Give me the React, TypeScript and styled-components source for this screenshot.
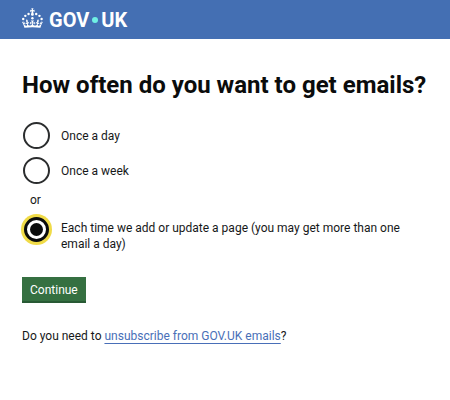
import React from "react";
import styled, { createGlobalStyle } from "styled-components";

const GlobalStyle = createGlobalStyle`
  * { box-sizing: border-box; }
  body {
    margin: 0;
    background: #ffffff;
    color: #161819;
    font-family: Roboto, "Liberation Sans", sans-serif;
    font-size: 12px;
    line-height: 16px;
  }
`;

const Header = styled.header`
  display: flex;
  align-items: center;
  height: 39px;
  padding: 0 22px;
  background: #446fb3;
`;

const HomeLink = styled.a`
  display: flex;
  align-items: center;
  gap: 6px;
  color: #ffffff;
  text-decoration: none;
`;

const CrownIcon = styled.svg`
  width: 21px;
  height: 20px;
  margin-bottom: 4px;
  fill: currentColor;
`;

const Wordmark = styled.span`
  display: flex;
  align-items: center;
  gap: 3px;
  font-size: 20px;
  line-height: 24px;
  font-weight: 700;
`;

const Dot = styled.span`
  width: 6px;
  height: 6px;
  border-radius: 50%;
  background: #6ff0e4;
`;

const Main = styled.main`
  padding: 30px 22px;
`;

const Fieldset = styled.fieldset`
  margin: 0;
  padding: 0;
  border: 0;
`;

const Legend = styled.legend`
  padding: 0;
`;

const Title = styled.h1`
  margin: 0;
  font-size: 24px;
  line-height: 32px;
  font-weight: 700;
  color: #0b0c0c;
`;

const Options = styled.div`
  display: flex;
  flex-direction: column;
  gap: 8px;
  padding: 21px 0 25px 1px;
`;

const Option = styled.label`
  display: flex;
  align-items: flex-start;
  gap: 11px;
  cursor: pointer;
`;

const OptionText = styled.span<{ $long?: boolean }>`
  padding-top: ${({ $long }) => ($long ? 4 : 6)}px;
`;

const Radio = styled.input`
  appearance: none;
  display: grid;
  place-items: center;
  flex: none;
  width: 27px;
  height: 27px;
  margin: 0;
  border: 2px solid #2b2d2e;
  border-radius: 50%;
  background: #ffffff;
  outline: none;

  &:checked {
    width: 25px;
    height: 25px;
    margin: 1px;
    border-width: 3px;
    border-color: #0b0c0c;
    box-shadow: 0 0 0 3px #f0db48;
  }

  &:checked::before {
    content: "";
    width: 13px;
    height: 13px;
    border-radius: 50%;
    background: #0b0c0c;
  }
`;

const Divider = styled.div`
  padding-left: 7px;
`;

const Button = styled.button`
  display: block;
  padding: 4px 8px;
  border: 0;
  border-radius: 0;
  background: #357041;
  box-shadow: inset 0 -2px 0 #285a34;
  color: #ffffff;
  font: inherit;
  line-height: 18px;
  cursor: pointer;
`;

const Help = styled.p`
  margin: 25px 0 0;
`;

const Link = styled.a`
  color: #496fb8;
  text-decoration: underline;
  text-decoration-thickness: 1px;
  text-underline-offset: 3px;
`;

const choices = [
  { value: "daily", text: "Once a day" },
  { value: "weekly", text: "Once a week" },
  {
    value: "immediately",
    text: "Each time we add or update a page (you may get more than one email a day)",
    divider: "or",
    long: true,
  },
];

function Crown() {
  return (
    <CrownIcon viewBox="0 0 64 60" aria-hidden="true">
      <circle cx="20" cy="17.6" r="3.7" />
      <circle cx="10.2" cy="23.5" r="3.7" />
      <circle cx="3.7" cy="33.2" r="3.7" />
      <circle cx="31.7" cy="30.6" r="3.7" />
      <circle cx="43.3" cy="17.6" r="3.7" />
      <circle cx="53.2" cy="23.5" r="3.7" />
      <circle cx="59.7" cy="33.2" r="3.7" />
      <path d="M33.1,9.8c.2-.1.3-.3.5-.5l4.6,2.4v-6.8l-4.6,1.5c-.1-.2-.3-.3-.5-.5l1.9-5.9h-6.7l1.9,5.9c-.2.1-.3.3-.5.5l-4.6-1.5v6.8l4.6-2.4c.1.2.3.3.5.5l-2.6,8c-.9,2.8,1.2,5.7,4.1,5.7h0c3,0,5.1-2.9,4.1-5.7l-2.6-8ZM37,37.9s-3.4,3.8-4.1,6.1c2.2,0,4.2-.5,6.4-2.8l-.7,8.5c-2-2.8-4.4-4.1-5.7-3.8.1,3.1.5,6.7,5.8,7.2,3.7.3,6.7-1.5,7-3.8.4-2.6-2-4.3-3.7-1.6-1.4-4.5,2.4-6.1,4.9-3.2-1.9-4.5-1.8-7.7,2.4-10.9,3,4,2.6,7.3-1.2,11.1,2.4-1.3,6.2,0,4,4.6-1.2-2.8-3.7-2.2-4.2.2-.3,1.7.7,3.7,3,4.2,1.9.3,4.7-.9,7-5.9-1.3,0-2.4.7-3.9,1.7l2.4-8c.6,2.3,1.4,3.7,2.2,4.5.6-1.6.5-2.8,0-5.3l5,1.8c-2.6,3.6-5.2,8.7-7.3,17.5-7.4-1.1-15.7-1.7-24.5-1.7h0c-8.8,0-17.1.6-24.5,1.7-2.1-8.9-4.7-13.9-7.3-17.5l5-1.8c-.5,2.5-.6,3.7,0,5.3.8-.8,1.6-2.3,2.2-4.5l2.4,8c-1.5-1-2.6-1.7-3.9-1.7,2.3,5,5.2,6.2,7,5.9,2.3-.4,3.3-2.4,3-4.2-.5-2.4-3-3.1-4.2-.2-2.2-4.6,1.6-6,4-4.6-3.7-3.7-4.2-7.1-1.2-11.1,4.2,3.2,4.3,6.4,2.4,10.9,2.5-2.8,6.3-1.3,4.9,3.2-1.8-2.7-4.1-1-3.7,1.6.3,2.3,3.3,4.1,7,3.8,5.4-.5,5.7-4.2,5.8-7.2-1.3-.2-3.7,1-5.7,3.8l-.7-8.5c2.2,2.3,4.2,2.7,6.4,2.8-.7-2.3-4.1-6.1-4.1-6.1h10.6Z" />
    </CrownIcon>
  );
}

export default function App() {
  return (
    <>
      <GlobalStyle />
      <Header>
        <HomeLink href="#" aria-label="GOV.UK">
          <Crown />
          <Wordmark>
            <span>GOV</span>
            <Dot />
            <span>UK</span>
          </Wordmark>
        </HomeLink>
      </Header>
      <Main>
        <form onSubmit={(event) => event.preventDefault()}>
          <Fieldset>
            <Legend>
              <Title>How often do you want to get emails?</Title>
            </Legend>
            <Options>
              {choices.map((choice) => (
                <React.Fragment key={choice.value}>
                  {choice.divider && <Divider>{choice.divider}</Divider>}
                  <Option htmlFor={choice.value}>
                    <Radio
                      type="radio"
                      id={choice.value}
                      name="frequency"
                      value={choice.value}
                      defaultChecked={choice.value === "immediately"}
                    />
                    <OptionText $long={choice.long}>{choice.text}</OptionText>
                  </Option>
                </React.Fragment>
              ))}
            </Options>
          </Fieldset>
          <Button type="submit">Continue</Button>
        </form>
        <Help>
          Do you need to <Link href="#">unsubscribe from GOV.UK emails</Link>?
        </Help>
      </Main>
    </>
  );
}
